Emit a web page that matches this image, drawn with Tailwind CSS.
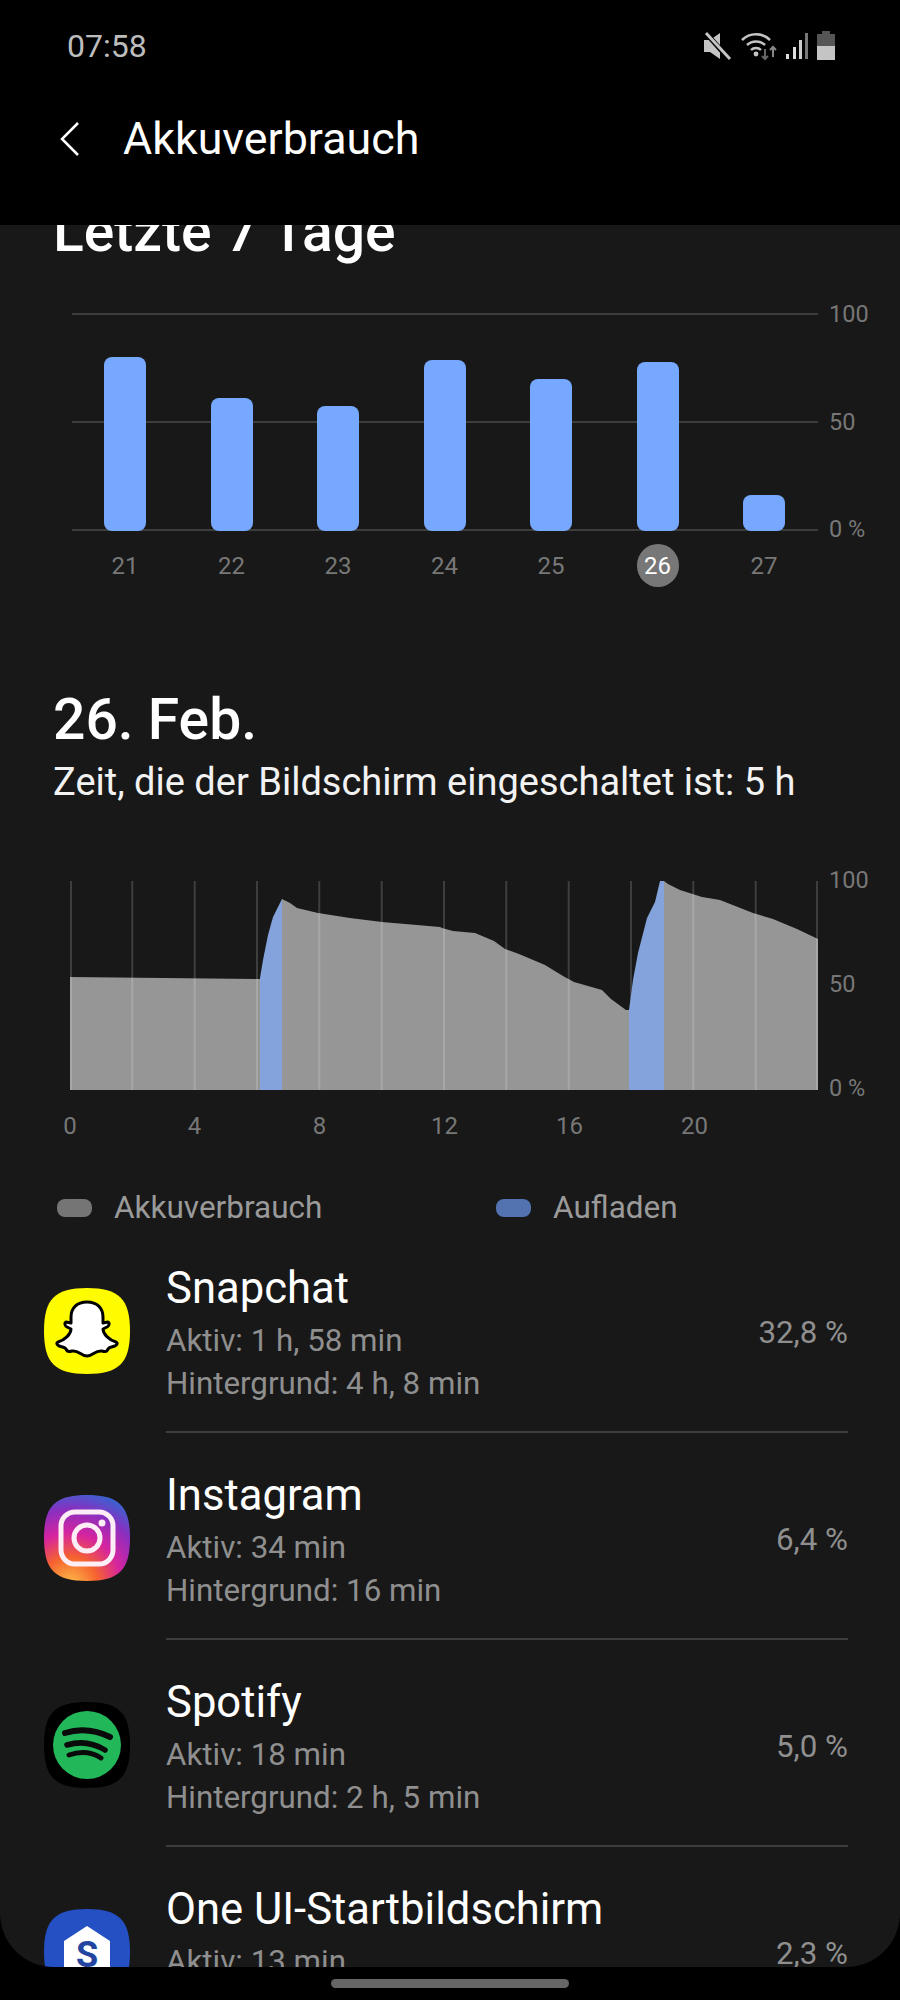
<!DOCTYPE html>
<html lang="de">
<head>
    <meta charset="UTF-8">
    <meta name="viewport" content="width=device-width, initial-scale=1.0">
    <title>Akkuverbrauch</title>
    <script src="https://cdn.jsdelivr.net/npm/@tailwindcss/browser@4"></script>
</head>
<body class="bg-black font-['Roboto',sans-serif] text-white">
<div class="w-[900px] h-[2000px] flex flex-col overflow-hidden bg-black">
    <!-- Header -->
    <header class="h-[225px] shrink-0 relative z-10 bg-black">
        <div class="flex items-center justify-between pl-[67px] pr-[65px] pt-[27px] h-[65px]">
            <span class="text-[32px] leading-[38px] text-[#bdbdbd]">07:58</span>
            <div class="flex items-center gap-[8px]">
                <svg width="32" height="30" viewBox="0 0 32 30"><path d="M3 9h6l10-7v26l-10-7H3z" fill="#c4c4c4"/><path d="M4 1l24 27" stroke="#000" stroke-width="5"/><path d="M5 2l24 26" stroke="#c4c4c4" stroke-width="3"/></svg>
                <svg width="36" height="32" viewBox="0 0 36 32" fill="none"><path d="M1 10a20 20 0 0 1 28 0M6 15a13 13 0 0 1 18 0M10 20a7 7 0 0 1 10 0" stroke="#c4c4c4" stroke-width="2.5"/><circle cx="15" cy="24" r="2.4" fill="#c4c4c4"/><path d="M24 19v10m-3-3 3 3 3-3" stroke="#666" stroke-width="2"/><path d="M32 27V17m-3 3 3-3 3 3" stroke="#888" stroke-width="2"/></svg>
                <svg width="24" height="28" viewBox="0 0 24 28"><rect x="1" y="22" width="3" height="5" fill="#ddd"/><rect x="8" y="15" width="3" height="12" fill="#ddd"/><rect x="14" y="8" width="3" height="19" fill="#ccc"/><rect x="20" y="1" width="3" height="26" fill="#777"/></svg>
                <svg width="18" height="30" viewBox="0 0 18 30"><rect x="5" y="0" width="8" height="4" fill="#555"/><rect x="0" y="3" width="18" height="12" fill="#555"/><rect x="0" y="15" width="18" height="14" fill="#c4c4c4"/></svg>
            </div>
        </div>
        <div class="flex items-center pl-[58px] mt-[49px]">
            <svg width="22" height="36" viewBox="0 0 22 36" fill="none"><path d="M20 2 4 18l16 16" stroke="#fff" stroke-width="2.5"/></svg>
            <h1 class="ml-[43px] text-[44.8px] leading-[50px] whitespace-nowrap">Akkuverbrauch</h1>
        </div>
    </header>

    <!-- Scrolled content -->
    <main class="h-[1742px] shrink-0 bg-[#181818] rounded-b-[54px] overflow-hidden">
        <h2 class="mt-[-23px] pl-[53px] text-[57px] leading-[60px] font-medium whitespace-nowrap">Letzte 7 Tage</h2>

        <!-- Weekly chart -->
        <div class="relative mt-[51px] ml-[72px] w-[746px] h-[218px]">
            <div class="absolute inset-x-0 top-0 h-[2px] bg-[#3d3d3d]"></div>
            <div class="absolute inset-x-0 top-[108px] h-[2px] bg-[#3d3d3d]"></div>
            <div class="absolute inset-x-0 bottom-0 h-[2px] bg-[#3d3d3d]"></div>
            <div class="absolute left-[757px] top-[-13px] text-[23.5px] leading-[28px] text-[#777] whitespace-nowrap">100</div>
            <div class="absolute left-[757px] top-[95px] text-[23.5px] leading-[28px] text-[#777] whitespace-nowrap">50</div>
            <div class="absolute left-[757px] top-[202px] text-[23.5px] leading-[28px] text-[#777] whitespace-nowrap">0 %</div>
            <div class="relative flex items-end h-full pl-[32px] gap-[64.5px]">
                <div class="w-[42px] h-[174px] bg-[#76a8ff] rounded-[8px]"></div>
                <div class="w-[42px] h-[133px] bg-[#76a8ff] rounded-[8px]"></div>
                <div class="w-[42px] h-[125px] bg-[#76a8ff] rounded-[8px]"></div>
                <div class="w-[42px] h-[171px] bg-[#76a8ff] rounded-[8px]"></div>
                <div class="w-[42px] h-[152px] bg-[#76a8ff] rounded-[8px]"></div>
                <div class="w-[42px] h-[169px] bg-[#76a8ff] rounded-[8px]"></div>
                <div class="w-[42px] h-[36px] bg-[#76a8ff] rounded-[8px]"></div>
            </div>
        </div>
        <div class="flex ml-[104px] mt-[13px] gap-[64.5px] text-[24px] leading-[44px] text-[#777] text-center">
            <span class="w-[42px]">21</span>
            <span class="w-[42px]">22</span>
            <span class="w-[42px]">23</span>
            <span class="w-[42px]">24</span>
            <span class="w-[42px]">25</span>
            <span class="w-[42px] h-[43px] rounded-full bg-[#777] text-white">26</span>
            <span class="w-[42px]">27</span>
        </div>

        <!-- Day summary -->
        <h2 class="mt-[101px] pl-[53px] text-[57px] leading-[62px] font-medium whitespace-nowrap">26. Feb.</h2>
        <p class="mt-[9px] pl-[53px] text-[38px] leading-[44px] whitespace-nowrap text-[#f2f2f2]">Zeit, die der Bildschirm eingeschaltet ist: 5 h</p>

        <!-- Day chart -->
        <div class="relative mt-[77px] ml-[70px] w-[748px] h-[209px]">
            <svg class="block" width="748" height="209" viewBox="0 0 748 209">
                <polygon fill="#969696" points="0,209 0,96 190,98 190,209"/>
                <polygon fill="#969696" points="212,209 212,18 220,22 227,27 248,32 280,37 312,41 370,46 372,47 383,50 405,52 424,60 435,68 449,73 475,84 493,95 504,101 532,109 541,118 556,129 559,129 559,209"/>
                <polygon fill="#969696" points="594,209 594,0 598,3 610,9 632,16 650,19 683,32 703,38 727,48 748,58 748,209"/>
                <g stroke="#fff" stroke-opacity="0.17" stroke-width="2">
                    <path d="M1 0v209M62.3 0v209M124.7 0v209M187 0v209M249.3 0v209M311.7 0v209M374 0v209M436.3 0v209M498.7 0v209M561 0v209M623.3 0v209M685.7 0v209M747 0v209"/>
                </g>
                <polygon fill="#84a3dc" points="190,209 190,97 193,79 198,54 203,36 212,18 212,209"/>
                <polygon fill="#84a3dc" points="559,209 559,129 563,99 568,72 577,37 585,21 590,0 594,0 594,209"/>
            </svg>
            <div class="absolute left-[759px] top-[-15px] text-[23.5px] leading-[28px] text-[#777] whitespace-nowrap">100</div>
            <div class="absolute left-[759px] top-[89px] text-[23.5px] leading-[28px] text-[#777] whitespace-nowrap">50</div>
            <div class="absolute left-[759px] top-[193px] text-[23.5px] leading-[28px] text-[#777] whitespace-nowrap">0 %</div>
        </div>
        <div class="flex mt-[22px] ml-[40px] text-[24px] leading-[28px] text-[#777] text-center">
            <span class="w-[60px]">0</span>
            <span class="w-[125px] ml-[32px]">4</span>
            <span class="w-[125px]">8</span>
            <span class="w-[125px]">12</span>
            <span class="w-[125px]">16</span>
            <span class="w-[125px]">20</span>
        </div>

        <!-- Legend -->
        <div class="flex items-center mt-[48px] ml-[57px] text-[31.5px] leading-[40px] text-[#9a9a9a]">
            <span class="w-[35px] h-[18px] rounded-[8px] bg-[#757575]"></span>
            <span class="ml-[22px] w-[382px] whitespace-nowrap">Akkuverbrauch</span>
            <span class="w-[35px] h-[18px] rounded-[8px] bg-[#5273b0]"></span>
            <span class="ml-[22px] whitespace-nowrap">Aufladen</span>
        </div>

        <!-- App list -->
        <ul class="mt-[19px]">
            <li class="flex h-[207px]">
                <div class="w-[166px] shrink-0 pl-[44px] pt-[41px]">
                    <svg width="86" height="86" viewBox="0 0 86 86">
                        <path d="M43 0C75 0 86 11 86 43S75 86 43 86 0 75 0 43 11 0 43 0z" fill="#fffc00"/>
                        <path d="M43 14c10 0 16 6 16 15v6l5-1c2 1 1 4-1 5l-4 2c0 5 6 11 13 13 2 1 1 3-1 4-3 1-6 1-7 3-1 3-3 3-6 2-7-1-9 5-15 5s-8-6-15-5c-3 1-5 1-6-2-1-2-4-2-7-3-2-1-3-3-1-4 7-2 13-8 13-13l-4-2c-2-1-3-4-1-5l5 1v-6c0-9 6-15 16-15z" fill="#fff" stroke="#000" stroke-width="3" stroke-linejoin="round"/>
                    </svg>
                </div>
                <div class="flex-1 relative h-[186px] border-b-2 border-[#3d3d3d] mr-[52px] pt-[17px]">
                    <div class="text-[43.6px] leading-[50px] whitespace-nowrap">Snapchat</div>
                    <div class="mt-[5px] text-[31.3px] leading-[43px] text-[#8f8f8f] whitespace-nowrap">Aktiv: 1 h, 58 min</div>
                    <div class="text-[31.3px] leading-[43px] text-[#8f8f8f] whitespace-nowrap">Hintergrund: 4 h, 8 min</div>
                    <div class="absolute right-0 top-[66px] text-[31.3px] leading-[40px] text-[#8f8f8f] whitespace-nowrap">32,8 %</div>
                </div>
            </li>
            <li class="flex h-[207px]">
                <div class="w-[166px] shrink-0 pl-[44px] pt-[41px]">
                    <svg width="86" height="86" viewBox="0 0 86 86">
                        <defs>
                            <radialGradient id="ig" cx="0.3" cy="1.05" r="1.1">
                                <stop offset="0" stop-color="#fdc24a"/>
                                <stop offset="0.3" stop-color="#f5622f"/>
                                <stop offset="0.55" stop-color="#d6249f"/>
                                <stop offset="0.8" stop-color="#8a2fc0"/>
                                <stop offset="1" stop-color="#3f5fd0"/>
                            </radialGradient>
                        </defs>
                        <path d="M43 0C75 0 86 11 86 43S75 86 43 86 0 75 0 43 11 0 43 0z" fill="url(#ig)"/>
                        <rect x="17" y="17" width="52" height="52" rx="14" fill="none" stroke="#fdeef6" stroke-width="5"/>
                        <circle cx="43" cy="43" r="13" fill="none" stroke="#fdeef6" stroke-width="5"/>
                        <circle cx="58" cy="28" r="3.5" fill="#fdeef6"/>
                    </svg>
                </div>
                <div class="flex-1 relative h-[186px] border-b-2 border-[#3d3d3d] mr-[52px] pt-[17px]">
                    <div class="text-[43.6px] leading-[50px] whitespace-nowrap">Instagram</div>
                    <div class="mt-[5px] text-[31.3px] leading-[43px] text-[#8f8f8f] whitespace-nowrap">Aktiv: 34 min</div>
                    <div class="text-[31.3px] leading-[43px] text-[#8f8f8f] whitespace-nowrap">Hintergrund: 16 min</div>
                    <div class="absolute right-0 top-[66px] text-[31.3px] leading-[40px] text-[#8f8f8f] whitespace-nowrap">6,4 %</div>
                </div>
            </li>
            <li class="flex h-[207px]">
                <div class="w-[166px] shrink-0 pl-[44px] pt-[41px]">
                    <svg width="86" height="86" viewBox="0 0 86 86" fill="none">
                        <path d="M43 0C75 0 86 11 86 43S75 86 43 86 0 75 0 43 11 0 43 0z" fill="#000"/>
                        <circle cx="43" cy="43" r="34" fill="#22b85a"/>
                        <path d="M21 31Q43 24 66 35" stroke="#0a0a0a" stroke-width="6" stroke-linecap="round"/>
                        <path d="M23 43Q43 37 61 48" stroke="#0a0a0a" stroke-width="5.5" stroke-linecap="round"/>
                        <path d="M25 53Q43 47 57 56" stroke="#0a0a0a" stroke-width="5" stroke-linecap="round"/>
                    </svg>
                </div>
                <div class="flex-1 relative h-[186px] border-b-2 border-[#3d3d3d] mr-[52px] pt-[17px]">
                    <div class="text-[43.6px] leading-[50px] whitespace-nowrap">Spotify</div>
                    <div class="mt-[5px] text-[31.3px] leading-[43px] text-[#8f8f8f] whitespace-nowrap">Aktiv: 18 min</div>
                    <div class="text-[31.3px] leading-[43px] text-[#8f8f8f] whitespace-nowrap">Hintergrund: 2 h, 5 min</div>
                    <div class="absolute right-0 top-[66px] text-[31.3px] leading-[40px] text-[#8f8f8f] whitespace-nowrap">5,0 %</div>
                </div>
            </li>
            <li class="flex h-[207px]">
                <div class="w-[166px] shrink-0 pl-[44px] pt-[41px]">
                    <div class="relative w-[86px] h-[86px]">
                        <svg width="86" height="86" viewBox="0 0 86 86">
                            <path d="M43 0C75 0 86 11 86 43S75 86 43 86 0 75 0 43 11 0 43 0z" fill="#2450c4"/>
                            <path d="M43 17 66 32V86H20V32z" fill="#fff"/>
                        </svg>
                        <span class="absolute inset-x-0 top-[26px] text-center text-[36px] leading-[40px] font-bold text-[#23459f]">S</span>
                    </div>
                </div>
                <div class="flex-1 relative mr-[52px] pt-[17px]">
                    <div class="text-[43.6px] leading-[50px] whitespace-nowrap">One UI-Startbildschirm</div>
                    <div class="mt-[5px] text-[31.3px] leading-[43px] text-[#8f8f8f] whitespace-nowrap">Aktiv: 13 min</div>
                    <div class="absolute right-0 top-[66px] text-[31.3px] leading-[40px] text-[#8f8f8f] whitespace-nowrap">2,3 %</div>
                </div>
            </li>
        </ul>
    </main>

    <!-- Gesture bar -->
    <div class="flex justify-center pt-[12px]">
        <div class="w-[238px] h-[9px] rounded-full bg-[#666]"></div>
    </div>
</div>
</body>
</html>
